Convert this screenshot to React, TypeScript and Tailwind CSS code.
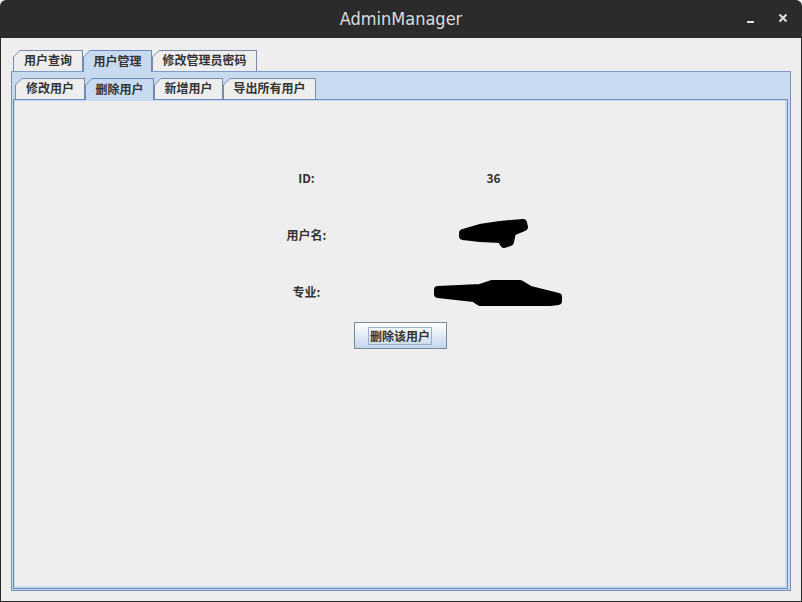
import React from "react";

const font = { fontFamily: '"Noto Sans CJK SC", "Noto Sans", sans-serif' };

function Tab({ label, width, selected }: { label: string; width: string; selected?: boolean }) {
  return (
    <div
      className={`${width} ${selected ? "h-[22px] -mb-px relative z-10 bg-[#6b88c0] px-px pt-px" : "h-[21px] bg-[#7a8aa8] px-px pt-px"} [clip-path:polygon(7px_0,100%_0,100%_100%,0_100%,0_7px)]`}
    >
      <div
        className={`h-full flex items-center justify-center pb-[2px] text-[12px] font-bold text-[#333333] ${selected ? "bg-[#c8daf0]" : "bg-[#eeeeee]"} [clip-path:polygon(6px_0,100%_0,100%_100%,0_100%,0_6px)]`}
      >
        {label}
      </div>
    </div>
  );
}

function Row({ label, children }: { label: string; children: React.ReactNode }) {
  return (
    <div className="grid grid-cols-[187px_187px] h-[57px] items-center">
      <div className="text-center text-[12px] font-bold text-[#333333]">{label}</div>
      <div className="h-full flex items-center justify-center text-[12px] font-bold text-[#333333]">{children}</div>
    </div>
  );
}

function App() {
  return (
    <div className="w-[802px] h-[602px] bg-[#2b2b2b] rounded-t-[6px] flex flex-col" style={font}>
      <div className="h-[38px] flex items-center relative">
        <div
          className="flex-1 text-center text-[18px] text-[#dcdcdc] pb-[2px]"
          style={{ fontFamily: '"DejaVu Sans Condensed", "DejaVu Sans", sans-serif' }}
        >
          AdminManager
        </div>
        <div className="absolute right-[14px] top-[12px] flex items-center gap-[23px]">
          <svg width="9" height="12" viewBox="0 0 9 12">
            <rect x="1" y="9" width="7" height="2" fill="#e0e0e0" />
          </svg>
          <svg width="10" height="10" viewBox="0 0 10 10">
            <path d="M1.5 1.5 L8.5 8.5 M8.5 1.5 L1.5 8.5" stroke="#e0e0e0" strokeWidth="2" />
          </svg>
        </div>
      </div>
      <div className="flex-1 mx-px mb-px bg-[#eeeeee] pt-[12px] px-[10px] pb-[10px] flex flex-col">
        <div className="flex items-end pl-[2px] h-[21px]">
          <Tab label="用户查询" width="w-[70px]" />
          <Tab label="用户管理" width="w-[69px]" selected />
          <Tab label="修改管理员密码" width="w-[105px]" />
        </div>
        <div className="flex-1 border border-[#7b8db0] border-t-[#7f9ccb] bg-[#c8daf0] pt-[6px] pl-px pr-[2px] pb-px flex flex-col">
          <div className="flex items-end pl-[2px] h-[21px]">
            <Tab label="修改用户" width="w-[70px]" />
            <Tab label="删除用户" width="w-[69px]" selected />
            <Tab label="新增用户" width="w-[69px]" />
            <Tab label="导出所有用户" width="w-[93px]" />
          </div>
          <div className="flex-1 border border-[#6b88c0] bg-[#c8daf0] pt-px pl-px pr-[2px] pb-[2px] flex">
            <div className="flex-1 bg-[#eeeeee] flex flex-col items-center pt-[48px]">
              <Row label="ID:">36</Row>
              <Row label="用户名:">
                <svg width="187" height="57" viewBox="0 0 187 57">
                  <path
                    d="M63,27 L80,22 L100,19 L123,17 L124,21 L112,26 L110,36 L104,38 L101,33 L80,32 L63,30 Z"
                    fill="#000"
                    stroke="#000"
                    strokeWidth="8"
                    strokeLinejoin="round"
                  />
                </svg>
              </Row>
              <Row label="专业:">
                <svg width="187" height="57" viewBox="0 0 187 57">
                  <path
                    d="M38,27 L80,25 L92,21 L120,21 L130,27 L158,34 L158,38 L150,39 L80,39 L74,35 L38,31 Z"
                    fill="#000"
                    stroke="#000"
                    strokeWidth="8"
                    strokeLinejoin="round"
                  />
                </svg>
              </Row>
              <button className="mt-[2px] w-[93px] h-[27px] border border-[#7a8a99] bg-gradient-to-b from-[#ffffff] to-[#c4d6ec] flex items-center justify-center">
                <span className="border border-[#9aadc9] px-px text-[12px] font-bold text-[#333333] leading-[16px]">删除该用户</span>
              </button>
            </div>
          </div>
        </div>
      </div>
    </div>
  );
}

export default App;
